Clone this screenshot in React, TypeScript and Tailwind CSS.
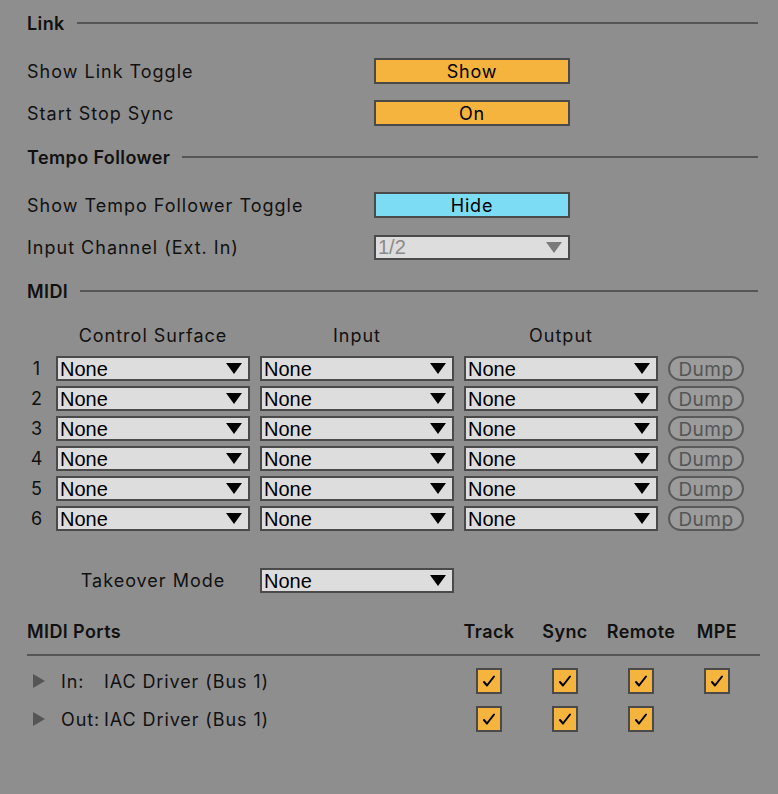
const ui = { fontFamily: 'Inter, "Open Sans", sans-serif' };
const sys = { fontFamily: '"Liberation Sans", Arial, sans-serif' };

function SectionHeader({ title, className = '' }: { title: string; className?: string }) {
  return (
    <div className={`flex items-center h-6 pr-[20px] ${className}`}>
      <span className="text-[18px] tracking-[0.4px] font-semibold text-[#111]">{title}</span>
      <div className="flex-1 h-[2px] bg-[#555] ml-[12px]" />
    </div>
  );
}

function Arrow({ dim }: { dim?: boolean }) {
  return (
    <svg width="16" height="11" viewBox="0 0 16 11" className="shrink-0">
      <path d="M0 0 H16 L8 11 Z" fill={dim ? '#7a7a7a' : '#000'} />
    </svg>
  );
}

function Dropdown({ value, dim, width = 'w-[194px]' }: { value: string; dim?: boolean; width?: string }) {
  return (
    <div
      className={`${width} h-[25px] flex items-center justify-between bg-[#dddddd] border-2 border-[#4a4a4a] pl-[2px] pr-[6px]`}
    >
      <span style={sys} className={`text-[20px] leading-none ${dim ? 'text-[#8a8a8a]' : 'text-black'}`}>
        {value}
      </span>
      <Arrow dim={dim} />
    </div>
  );
}

function Toggle({ label, color }: { label: string; color: string }) {
  return (
    <div className={`w-[196px] h-[26px] border-2 border-[#4a4a4a] ${color} flex items-center justify-center text-[18px] tracking-[0.8px] text-black`}>
      {label}
    </div>
  );
}

function Row({ label, children, className = '' }: { label: string; children: React.ReactNode; className?: string }) {
  return (
    <div className={`flex items-center h-[26px] ${className}`}>
      <span className="w-[347px] text-[18px] tracking-[1px] text-[#111]">{label}</span>
      {children}
    </div>
  );
}

function Check() {
  return (
    <div className="w-[26px] h-[26px] bg-[#f4b43e] border-2 border-[#4a4a4a] flex items-center justify-center">
      <svg width="16" height="14" viewBox="0 0 16 14">
        <path d="M3 8 L6 11.5 L13 2.5" fill="none" stroke="#000" strokeWidth="2" strokeLinecap="round" strokeLinejoin="round" />
      </svg>
    </div>
  );
}

function PortRow({ dir, name, checks, className = '' }: { dir: string; name: string; checks: boolean[]; className?: string }) {
  return (
    <div className={`flex items-center h-[26px] ${className}`}>
      <svg width="12" height="14" viewBox="0 0 12 14" className="ml-[6px] mr-[16px]">
        <path d="M0 0 L12 7 L0 14 Z" fill="#555" />
      </svg>
      <div className="w-[390px] text-[18px] tracking-[0.9px] text-[#111] flex">
        {dir === 'In:' ? <span className="w-[43px]">In:</span> : <span className="mr-[4px]">{dir}</span>}
        <span>{name}</span>
      </div>
      {checks.map((c, i) => (
        <div key={i} className="w-[76px] flex justify-center">
          {c ? <Check /> : null}
        </div>
      ))}
    </div>
  );
}

export default function App() {
  const rows = [1, 2, 3, 4, 5, 6];
  return (
    <div style={ui} className="w-[778px] h-[794px] bg-[#8e8e8e] pl-[27px] pt-[11px] overflow-hidden">
      <SectionHeader title="Link" />
      <Row label="Show Link Toggle" className="mt-[23px]">
        <Toggle label="Show" color="bg-[#f4b43e]" />
      </Row>
      <Row label="Start Stop Sync" className="mt-[16px]">
        <Toggle label="On" color="bg-[#f4b43e]" />
      </Row>

      <SectionHeader title="Tempo Follower" className="mt-[19px]" />
      <Row label="Show Tempo Follower Toggle" className="mt-[23px]">
        <Toggle label="Hide" color="bg-[#7cdcf4]" />
      </Row>
      <Row label="Input Channel (Ext. In)" className="mt-[16px]">
        <Dropdown value="1/2" dim width="w-[196px]" />
      </Row>

      <SectionHeader title="MIDI" className="mt-[19px]" />
      <div className="flex h-6 mt-[19px] text-[18px] tracking-[1px] text-[#111]">
        <div className="w-[29px]" />
        <div className="w-[194px] text-center">Control Surface</div>
        <div className="w-[10px]" />
        <div className="w-[194px] text-center">Input</div>
        <div className="w-[10px]" />
        <div className="w-[194px] text-center">Output</div>
      </div>
      <div className="flex flex-col gap-[5px] mt-[10px]">
        {rows.map((n) => (
          <div key={n} className="flex items-center h-[25px] gap-[10px]">
            <span className="w-[19px] text-[18px] leading-none text-[#111] text-center">{n}</span>
            <Dropdown value="None" />
            <Dropdown value="None" />
            <Dropdown value="None" />
            <div className="w-[76px] h-[25px] rounded-full border-2 border-[#5a5a5a] bg-[#9c9c9c] flex items-center justify-center pt-[2px] text-[19px] leading-none tracking-[0.5px] text-[#555]">
              Dump
            </div>
          </div>
        ))}
      </div>

      <div className="flex items-center mt-[36px]">
        <div className="w-[29px]" />
        <div className="w-[194px] text-center text-[18px] tracking-[1px] text-[#111]">Takeover Mode</div>
        <div className="w-[10px]" />
        <Dropdown value="None" />
      </div>

      <div className="flex items-center h-6 mt-[25px] mr-[18px]">
        <span className="w-[424px] text-[18px] tracking-[0.4px] font-semibold text-[#111]">MIDI Ports</span>
        {['Track', 'Sync', 'Remote', 'MPE'].map((h) => (
          <span key={h} className="w-[76px] text-center text-[18px] tracking-[0.4px] font-semibold text-[#111]">
            {h}
          </span>
        ))}
      </div>
      <div className="h-[2px] bg-[#555] mt-[11px] mr-[18px]" />
      <PortRow dir="In:" name="IAC Driver (Bus 1)" checks={[true, true, true, true]} className="mt-[12px]" />
      <PortRow dir="Out:" name="IAC Driver (Bus 1)" checks={[true, true, true, false]} className="mt-[12px]" />
    </div>
  );
}
